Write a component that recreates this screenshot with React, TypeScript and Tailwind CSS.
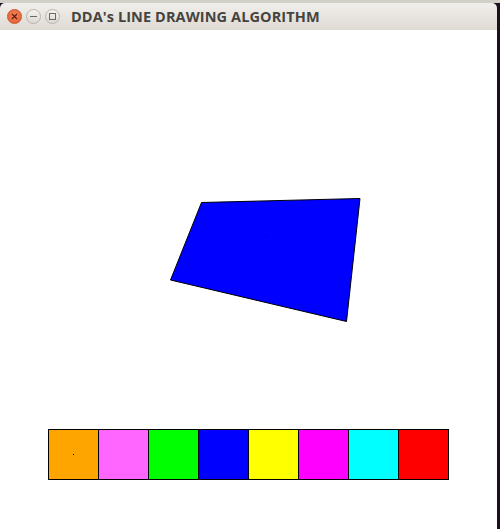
import React from 'react';

const swatches = ['#ffa500', '#ff66ff', '#00ff00', '#0000ff', '#ffff00', '#ff00ff', '#00ffff', '#ff0000'];

function TitleButton({ kind }: { kind: 'close' | 'min' | 'max' }) {
  if (kind === 'close') {
    return (
      <div className="w-[15px] h-[15px] rounded-full bg-[radial-gradient(circle_at_50%_40%,#f7845a,#e0592b)] border border-[#c9542c] flex items-center justify-center">
        <svg width="7" height="7" viewBox="0 0 7 7">
          <path d="M1 1 L6 6 M6 1 L1 6" stroke="#5a1e0a" strokeWidth="1.2" />
        </svg>
      </div>
    );
  }
  return (
    <div className="w-[15px] h-[15px] rounded-full bg-[linear-gradient(#f4f2ee,#dcd8d2)] border border-[#b9b5ae] flex items-center justify-center">
      {kind === 'min' ? (
        <div className="w-[7px] h-px bg-[#6c6a66]" />
      ) : (
        <div className="w-[7px] h-[7px] border border-[#6c6a66]" />
      )}
    </div>
  );
}

export default function App() {
  return (
    <div className="w-[500px] h-[529px] bg-[#1b1020] flex flex-col overflow-hidden">
      {/* Title bar */}
      <div className="h-[3px] bg-[#d3cfc9] w-[500px]" />
      <div className="w-[497px] h-[27px] bg-[linear-gradient(#f1efeb,#dedad4)] rounded-t-[5px] flex items-center pl-[7px] font-['Open_Sans',sans-serif]">
        <div className="flex items-center gap-[4px]">
          <TitleButton kind="close" />
          <TitleButton kind="min" />
          <TitleButton kind="max" />
        </div>
        <span className="ml-[11px] text-[14.5px] font-bold text-[#46443f] tracking-[0.1px]">DDA's LINE DRAWING ALGORITHM</span>
      </div>

      {/* Canvas */}
      <div className="w-[497px] flex-1 bg-white flex flex-col">
        <svg width="497" height="399" viewBox="0 30 497 399">
          <polygon
            points="201.5,202.5 360,198.5 346.5,321.5 170.5,280"
            fill="#0000ff"
            stroke="#000"
            strokeWidth="1"
          />
          <rect x="265" y="235" width="1" height="1" fill="#000" />
        </svg>
        <div className="ml-[48px] flex border-l border-t border-b border-black w-fit">
          {swatches.map((c, i) => (
            <div key={i} className="w-[50px] h-[49px] border-r border-black flex items-center justify-center" style={{ backgroundColor: c }}>
              {i === 0 && <div className="w-px h-px bg-black" />}
            </div>
          ))}
        </div>
      </div>
    </div>
  );
}
